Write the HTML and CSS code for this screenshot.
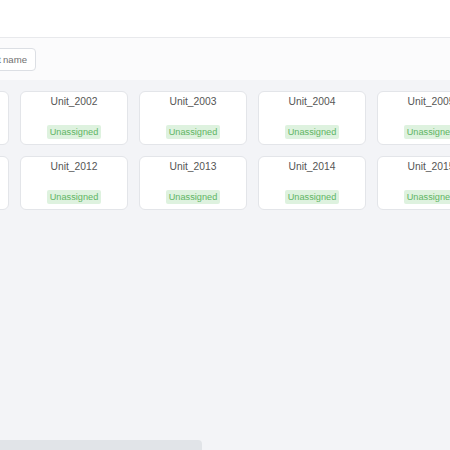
FILE: index.html
```html
<!DOCTYPE html>
<html>
<head>
<meta charset="utf-8">
<link rel="stylesheet" href="styles.css">
</head>
<body>
<div class="viewport">
  <div class="inner">
    <header class="header"></header>
    <div class="toolbar">
      <button class="btn">Sort by unit name</button>
    </div>
    <main class="grid-area">
      <div class="grid">
        <div class="card"><div class="title">Unit_2001</div><span class="badge">Unassigned</span></div>
        <div class="card"><div class="title">Unit_2002</div><span class="badge">Unassigned</span></div>
        <div class="card"><div class="title">Unit_2003</div><span class="badge">Unassigned</span></div>
        <div class="card"><div class="title">Unit_2004</div><span class="badge">Unassigned</span></div>
        <div class="card"><div class="title">Unit_2005</div><span class="badge">Unassigned</span></div>
        <div class="card"><div class="title">Unit_2011</div><span class="badge">Unassigned</span></div>
        <div class="card"><div class="title">Unit_2012</div><span class="badge">Unassigned</span></div>
        <div class="card"><div class="title">Unit_2013</div><span class="badge">Unassigned</span></div>
        <div class="card"><div class="title">Unit_2014</div><span class="badge">Unassigned</span></div>
        <div class="card"><div class="title">Unit_2015</div><span class="badge">Unassigned</span></div>
      </div>
    </main>
    <div class="footer"><div class="footer-bar"></div></div>
  </div>
</div>
</body>
</html>
```
FILE: styles.css
```css
html, body {
  margin: 0;
  padding: 0;
}
body {
  font-family: "Liberation Sans", Arial, sans-serif;
  background: #f3f4f7;
}
.viewport {
  width: 450px;
  height: 450px;
  overflow: hidden;
}
.inner {
  margin-left: -109px;
  width: 700px;
  height: 450px;
  display: flex;
  flex-direction: column;
}
.header {
  height: 37px;
  background: #ffffff;
  border-bottom: 1px solid #e8e9ec;
  flex: none;
}
.toolbar {
  height: 42px;
  background: #fbfbfc;
  display: flex;
  align-items: center;
  flex: none;
  padding-left: 49px;
}
.btn {
  height: 23px;
  width: 96px;
  border: 1px solid #dcdfe4;
  border-radius: 4px;
  background: #ffffff;
  color: #707070;
  font-family: "Liberation Sans", Arial, sans-serif;
  font-size: 9.6px;
  word-spacing: -0.6px;
  padding: 0 8px 0 0;
  text-align: right;
  white-space: nowrap;
  box-sizing: border-box;
}
.grid-area {
  flex: 1;
  background: #f3f4f7;
  padding: 11px 0 0 10px;
}
.grid {
  display: grid;
  grid-template-columns: repeat(5, 108px);
  column-gap: 11px;
  row-gap: 11px;
}
.card {
  height: 54px;
  box-sizing: border-box;
  background: #ffffff;
  border: 1px solid #e3e5e9;
  border-radius: 6px;
  display: flex;
  flex-direction: column;
  align-items: center;
  justify-content: space-between;
  padding: 3px 0 5px;
}
.title {
  font-size: 10.3px;
  line-height: 14px;
  color: #555555;
}
.badge {
  background: #def2df;
  color: #5fb563;
  font-size: 9.2px;
  line-height: 14px;
  height: 14px;
  padding: 0 3px;
  border-radius: 2px;
}
.footer {
  height: 10px;
  flex: none;
  background: #f3f4f7;
}
.footer-bar {
  width: 311px;
  height: 10px;
  background: #e1e4e8;
  border-top-right-radius: 4px;
}
```
